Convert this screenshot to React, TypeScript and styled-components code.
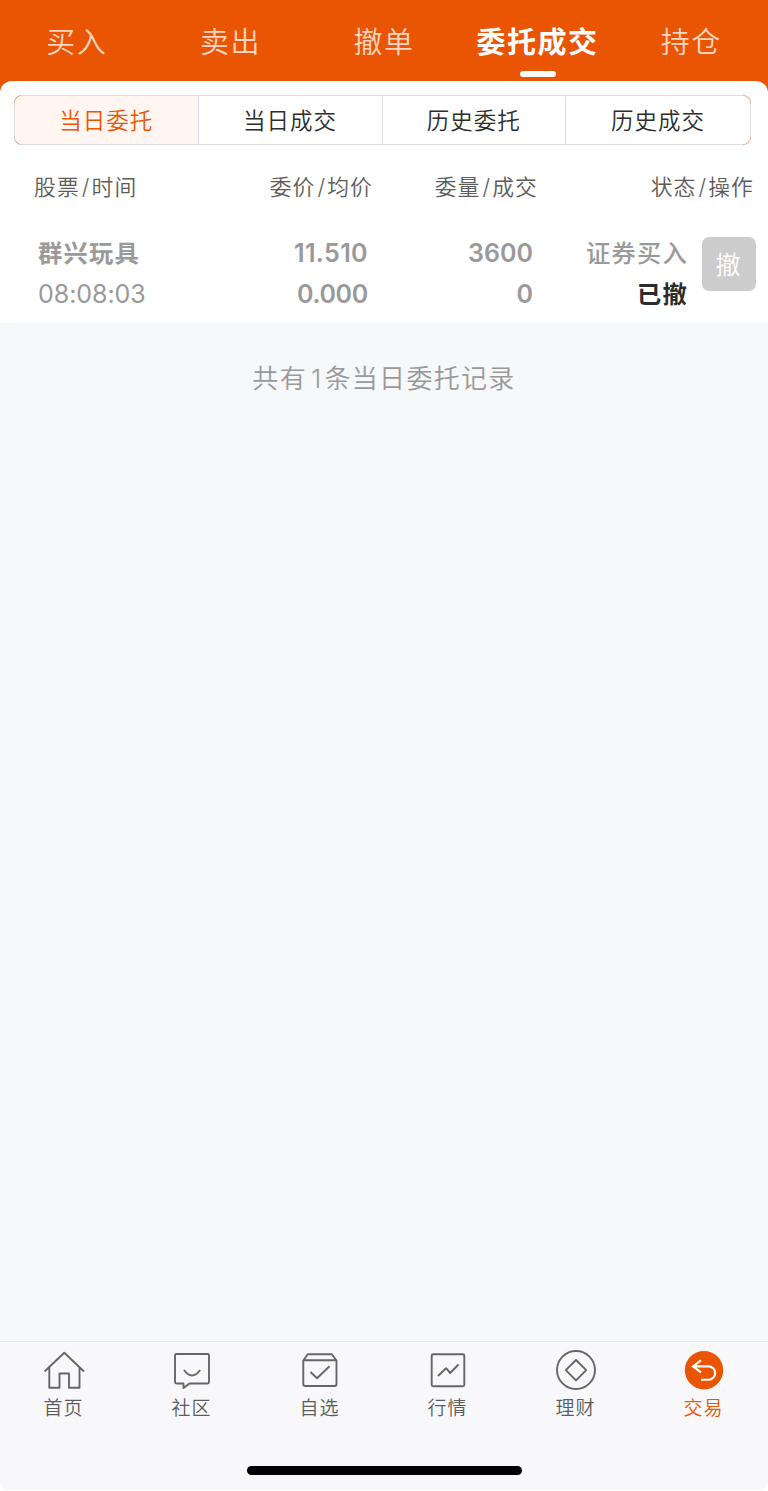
import React from "react";
import styled, { createGlobalStyle } from "styled-components";

const ORANGE = "#ea5504";

const GlobalStyle = createGlobalStyle`
  * { box-sizing: border-box; }
  body {
    margin: 0;
    background: #fff;
    font-family: Inter, "Noto Sans CJK SC", sans-serif;
    font-weight: 350;
  }
`;

const Screen = styled.div`
  width: 768px;
  height: 1490px;
  display: flex;
  flex-direction: column;
  background: #f7f8fa;
  border-radius: 0 0 9px 9px;
  overflow: hidden;
`;

const Top = styled.header`
  background: ${ORANGE};
`;

const TopTabs = styled.nav`
  height: 81px;
  display: grid;
  grid-template-columns: repeat(5, 1fr);
`;

const TopTab = styled.div<{ $active?: boolean }>`
  display: flex;
  flex-direction: column;
  align-items: center;
  padding-top: 22px;
  font-size: 29px;
  line-height: 42px;
  letter-spacing: 1.5px;
  white-space: nowrap;
  font-weight: ${(p) => (p.$active ? 700 : 350)};
  color: ${(p) => (p.$active ? "#fff" : "#fbd5c0")};
`;

const Indicator = styled.span`
  width: 36px;
  height: 6px;
  margin-top: 7px;
  border-radius: 3px;
  background: #fff;
`;

const Panel = styled.section`
  height: 242px;
  background: #fff;
  border-radius: 12px 12px 0 0;
  padding-top: 14px;
`;

const Segments = styled.div`
  display: grid;
  grid-template-columns: repeat(4, 1fr);
  width: 737px;
  height: 50px;
  margin-left: 14px;
  border: 1px solid transparent;
  border-radius: 8px;
  background:
    linear-gradient(#fff, #fff) padding-box,
    linear-gradient(transparent 8px, #dcdde1 8px 42px, transparent 42px) border-box,
    linear-gradient(90deg, #e3a582 0 7px, #dcdde1 7px 729px, #e3a582 729px) border-box;
  overflow: hidden;
`;

const Segment = styled.div<{ $active?: boolean }>`
  display: flex;
  justify-content: center;
  padding-top: 1px;
  line-height: 47px;
  font-size: 22.5px;
  letter-spacing: 1px;
  color: ${(p) => (p.$active ? ORANGE : "#2c2c2c")};
  background: ${(p) => (p.$active ? "#fff5f1" : "#fff")};
  border-right: 1px solid #dcdde1;
  &:last-child { border-right: 0; }
`;

const Columns = styled.div`
  display: grid;
  grid-template-columns: 373px 165px 1fr;
  margin-top: 26px;
  padding-right: 14px;
  line-height: 32px;
  font-size: 21.8px;
  letter-spacing: 1.1px;
  color: #5c5c5c;
`;

const PairHead = styled.div`
  display: flex;
  justify-content: space-between;
  padding-left: 34px;
`;

const Heading = styled.span`
  text-align: right;
`;

const Slash = styled.span`
  padding: 0 1px 0 2px;
`;

const Order = styled.div`
  display: grid;
  grid-template-columns: 200px 168px 165px 155px 1fr;
  align-items: start;
  margin-top: 29px;
`;

const Stack = styled.div<{ $left?: boolean }>`
  display: flex;
  flex-direction: column;
  align-items: ${(p) => (p.$left ? "flex-start" : "flex-end")};
  padding-left: ${(p) => (p.$left ? "38px" : "0")};
`;

const Value = styled.span<{ $tone?: "dark"; $weight?: number; $tracking?: number; $cjk?: boolean }>`
  height: 41px;
  line-height: 43px;
  white-space: nowrap;
  font-size: ${(p) => (p.$cjk ? 24.3 : 25)}px;
  letter-spacing: ${(p) => p.$tracking ?? (p.$cjk ? 1.2 : 0)}px;
  font-weight: ${(p) => p.$weight ?? 600};
  color: ${(p) => (p.$tone === "dark" ? "#2c2c2c" : "#999")};
`;

const Cancel = styled.button`
  width: 54px;
  height: 54px;
  margin: 5px 0 0 13.5px;
  padding: 0 1px 2px 0;
  border: 0;
  border-radius: 7px;
  background: #ccc;
  color: #fff;
  font: inherit;
  font-size: 25px;
`;

const Body = styled.main`
  flex: 1;
`;

const RowLine = styled.div`
  height: 1px;
  margin-left: 18px;
  background: #f1f2f6;
`;

const Summary = styled.p`
  margin: 35px 0 0;
  text-align: center;
  font-size: 26px;
  line-height: 40px;
  letter-spacing: 1.3px;
  color: #999;
`;

const Count = styled.span`
  padding: 0 2px 0 4px;
`;

const BottomNav = styled.nav`
  height: 149px;
  display: flex;
  flex-direction: column;
  align-items: center;
  background: #f8f8fb;
  border-top: 1px solid #e6e7ea;
`;

const NavItems = styled.div`
  width: 100%;
  height: 124px;
  display: grid;
  grid-template-columns: repeat(6, 1fr);
`;

const NavItem = styled.div<{ $active?: boolean }>`
  display: flex;
  flex-direction: column;
  align-items: center;
  padding-top: 6px;
  font-size: 19px;
  line-height: 28px;
  letter-spacing: 1px;
  color: ${(p) => (p.$active ? ORANGE : "#5c5c5c")};
  svg { display: block; margin-bottom: 3px; }
`;

const NavLabel = styled.span`
  margin-right: 1px;
`;

const HomeBar = styled.div`
  width: 275px;
  height: 9px;
  border-radius: 5px;
  background: #000;
`;

function Icon({ children }: { children: React.ReactNode }) {
  return (
    <svg width="44" height="44" viewBox="0 0 44 44" fill="none" stroke="#666" strokeWidth="1.9" strokeLinejoin="round">
      {children}
    </svg>
  );
}

const navItems: { label: string; icon: React.ReactNode; active?: boolean }[] = [
  { label: "首页", icon: <path d="M2.5 23.5 22.3 4.7 42 23.5M7.3 19V39.8H17.5V25.5H27V39.8H37.5V19" /> },
  {
    label: "社区",
    icon: (
      <>
        <path d="M6.5 6H37.5Q39 6 39 7.5V34Q39 35.5 37.5 35.5H19.5L13.5 40V35.5H6.5Q5 35.5 5 34V7.5Q5 6 6.5 6Z" />
        <path d="M14 22Q22 33 30.2 22" />
      </>
    ),
  },
  {
    label: "自选",
    icon: (
      <>
        <path d="M5.3 12.5 9.8 6.2H33.8L38.5 12.5V36Q38.5 38 36.5 38H7.3Q5.3 38 5.3 36ZM5.3 12.3H38.5" />
        <path d="M12.5 24 19 30.3 31.5 18.3" />
      </>
    ),
  },
  {
    label: "行情",
    icon: (
      <>
        <rect x="5.7" y="6.2" width="32.6" height="32" rx="1.5" />
        <path d="M12 28 20 20.2 24.2 25 32.5 16.5" />
      </>
    ),
  },
  {
    label: "理财",
    icon: (
      <>
        <circle cx="22" cy="22" r="19" />
        <path d="M22 12 32.2 22.2 22 32.4 11.8 22.2Z" />
      </>
    ),
  },
  {
    label: "交易",
    active: true,
    icon: (
      <>
        <circle cx="22" cy="22.2" r="19.2" fill={ORANGE} stroke="none" />
        <path
          d="M19 12.4 11 18.4 19 24.4M11 18.4H26.5A6.7 6.7 0 0 1 26.5 31.8H19"
          stroke="#fff"
          strokeWidth="2.1"
          strokeLinejoin="miter"
        />
      </>
    ),
  },
];

function Pair({ first, second }: { first: string; second: string }) {
  return (
    <Heading>
      {first}
      <Slash>/</Slash>
      {second}
    </Heading>
  );
}

export default function App() {
  return (
    <Screen>
      <GlobalStyle />
      <Top>
        <TopTabs>
          <TopTab>买入</TopTab>
          <TopTab>卖出</TopTab>
          <TopTab>撤单</TopTab>
          <TopTab $active>
            委托成交
            <Indicator />
          </TopTab>
          <TopTab>持仓</TopTab>
        </TopTabs>
        <Panel>
          <Segments>
            <Segment $active>当日委托</Segment>
            <Segment>当日成交</Segment>
            <Segment>历史委托</Segment>
            <Segment>历史成交</Segment>
          </Segments>
          <Columns>
            <PairHead>
              <Pair first="股票" second="时间" />
              <Pair first="委价" second="均价" />
            </PairHead>
            <Pair first="委量" second="成交" />
            <Pair first="状态" second="操作" />
          </Columns>
          <Order>
            <Stack $left>
              <Value $cjk>群兴玩具</Value>
              <Value $weight={400} $tracking={-0.05}>08:08:03</Value>
            </Stack>
            <Stack>
              <Value $tracking={0.4}>11.510</Value>
              <Value $tracking={-0.3}>0.000</Value>
            </Stack>
            <Stack>
              <Value>3600</Value>
              <Value>0</Value>
            </Stack>
            <Stack>
              <Value $cjk $weight={500}>证券买入</Value>
              <Value $cjk $tone="dark">已撤</Value>
            </Stack>
            <Cancel>撤</Cancel>
          </Order>
        </Panel>
      </Top>
      <Body>
        <RowLine />
        <Summary>
          共有<Count>1</Count>条当日委托记录
        </Summary>
      </Body>
      <BottomNav>
        <NavItems>
          {navItems.map((item) => (
            <NavItem key={item.label} $active={item.active}>
              <Icon>{item.icon}</Icon>
              <NavLabel>{item.label}</NavLabel>
            </NavItem>
          ))}
        </NavItems>
        <HomeBar />
      </BottomNav>
    </Screen>
  );
}
